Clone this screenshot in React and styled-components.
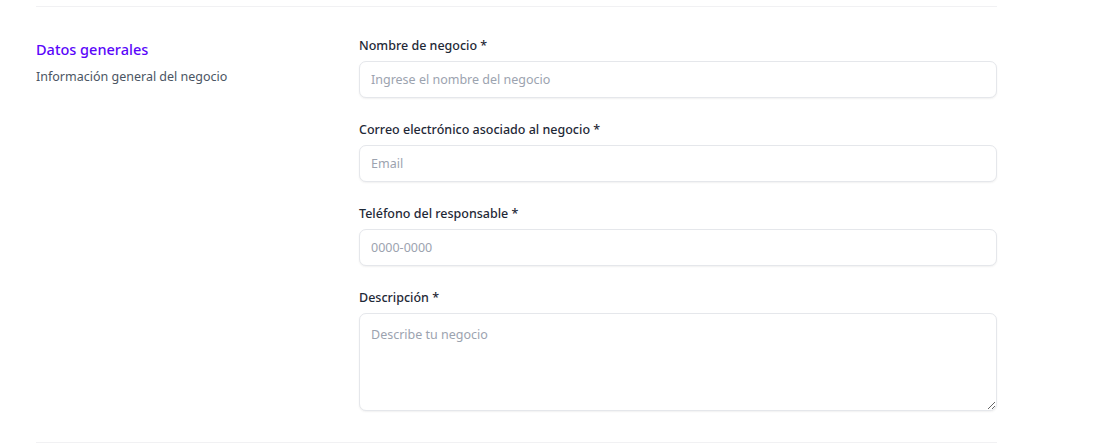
import React from 'react';
import styled, { createGlobalStyle } from 'styled-components';

const GlobalStyle = createGlobalStyle`
  body {
    margin: 0;
    background: #fff;
    font-family: 'Noto Sans', 'Segoe UI', sans-serif;
  }
`;

const Page = styled.div`
  padding: 6px 98px 0 36px;
`;

const Section = styled.section`
  display: grid;
  grid-template-columns: repeat(3, 1fr);
  column-gap: 8px;
  border-top: 1px solid #f1f1f3;
  border-bottom: 1px solid #f1f1f3;
  padding: 31px 0 31px;
`;

const Intro = styled.div`
  display: flex;
  flex-direction: column;
  gap: 7px;
`;

const Title = styled.h2`
  margin: 0;
  font-size: 14.5px;
  font-weight: 500;
  color: #5a06fa;
  line-height: 22px;
`;

const Subtitle = styled.p`
  margin: 0;
  font-size: 12.5px;
  color: #4b5563;
  line-height: 20px;
`;

const Fields = styled.div`
  grid-column: span 2;
  display: flex;
  flex-direction: column;
  gap: 24px;
`;

const Field = styled.div`
  display: flex;
  flex-direction: column;
  gap: 7px;
`;

const Label = styled.label`
  font-size: 12.5px;
  font-weight: 500;
  color: #1f2937;
  line-height: 16px;
`;

const inputBase = `
  box-sizing: border-box;
  width: 100%;
  border: 1px solid #e5e7eb;
  border-radius: 7px;
  box-shadow: 0 1px 2px rgba(0, 0, 0, 0.06);
  font-family: inherit;
  font-size: 12.5px;
  color: #111827;
  padding: 0 11px;
  outline: none;
  &::placeholder {
    color: #9ca3af;
  }
`;

const Input = styled.input`
  ${inputBase}
  height: 37px;
`;

const TextArea = styled.textarea`
  ${inputBase}
  height: 98px;
  padding-top: 12px;
  resize: vertical;
  display: block;
`;

export default function App() {
  return (
    <Page>
      <GlobalStyle />
      <Section>
        <Intro>
          <Title>Datos generales</Title>
          <Subtitle>Información general del negocio</Subtitle>
        </Intro>
        <Fields>
          <Field>
            <Label>Nombre de negocio *</Label>
            <Input placeholder="Ingrese el nombre del negocio" />
          </Field>
          <Field>
            <Label>Correo electrónico asociado al negocio *</Label>
            <Input type="email" placeholder="Email" />
          </Field>
          <Field>
            <Label>Teléfono del responsable *</Label>
            <Input placeholder="0000-0000" />
          </Field>
          <Field>
            <Label>Descripción *</Label>
            <TextArea placeholder="Describe tu negocio" />
          </Field>
        </Fields>
      </Section>
    </Page>
  );
}
